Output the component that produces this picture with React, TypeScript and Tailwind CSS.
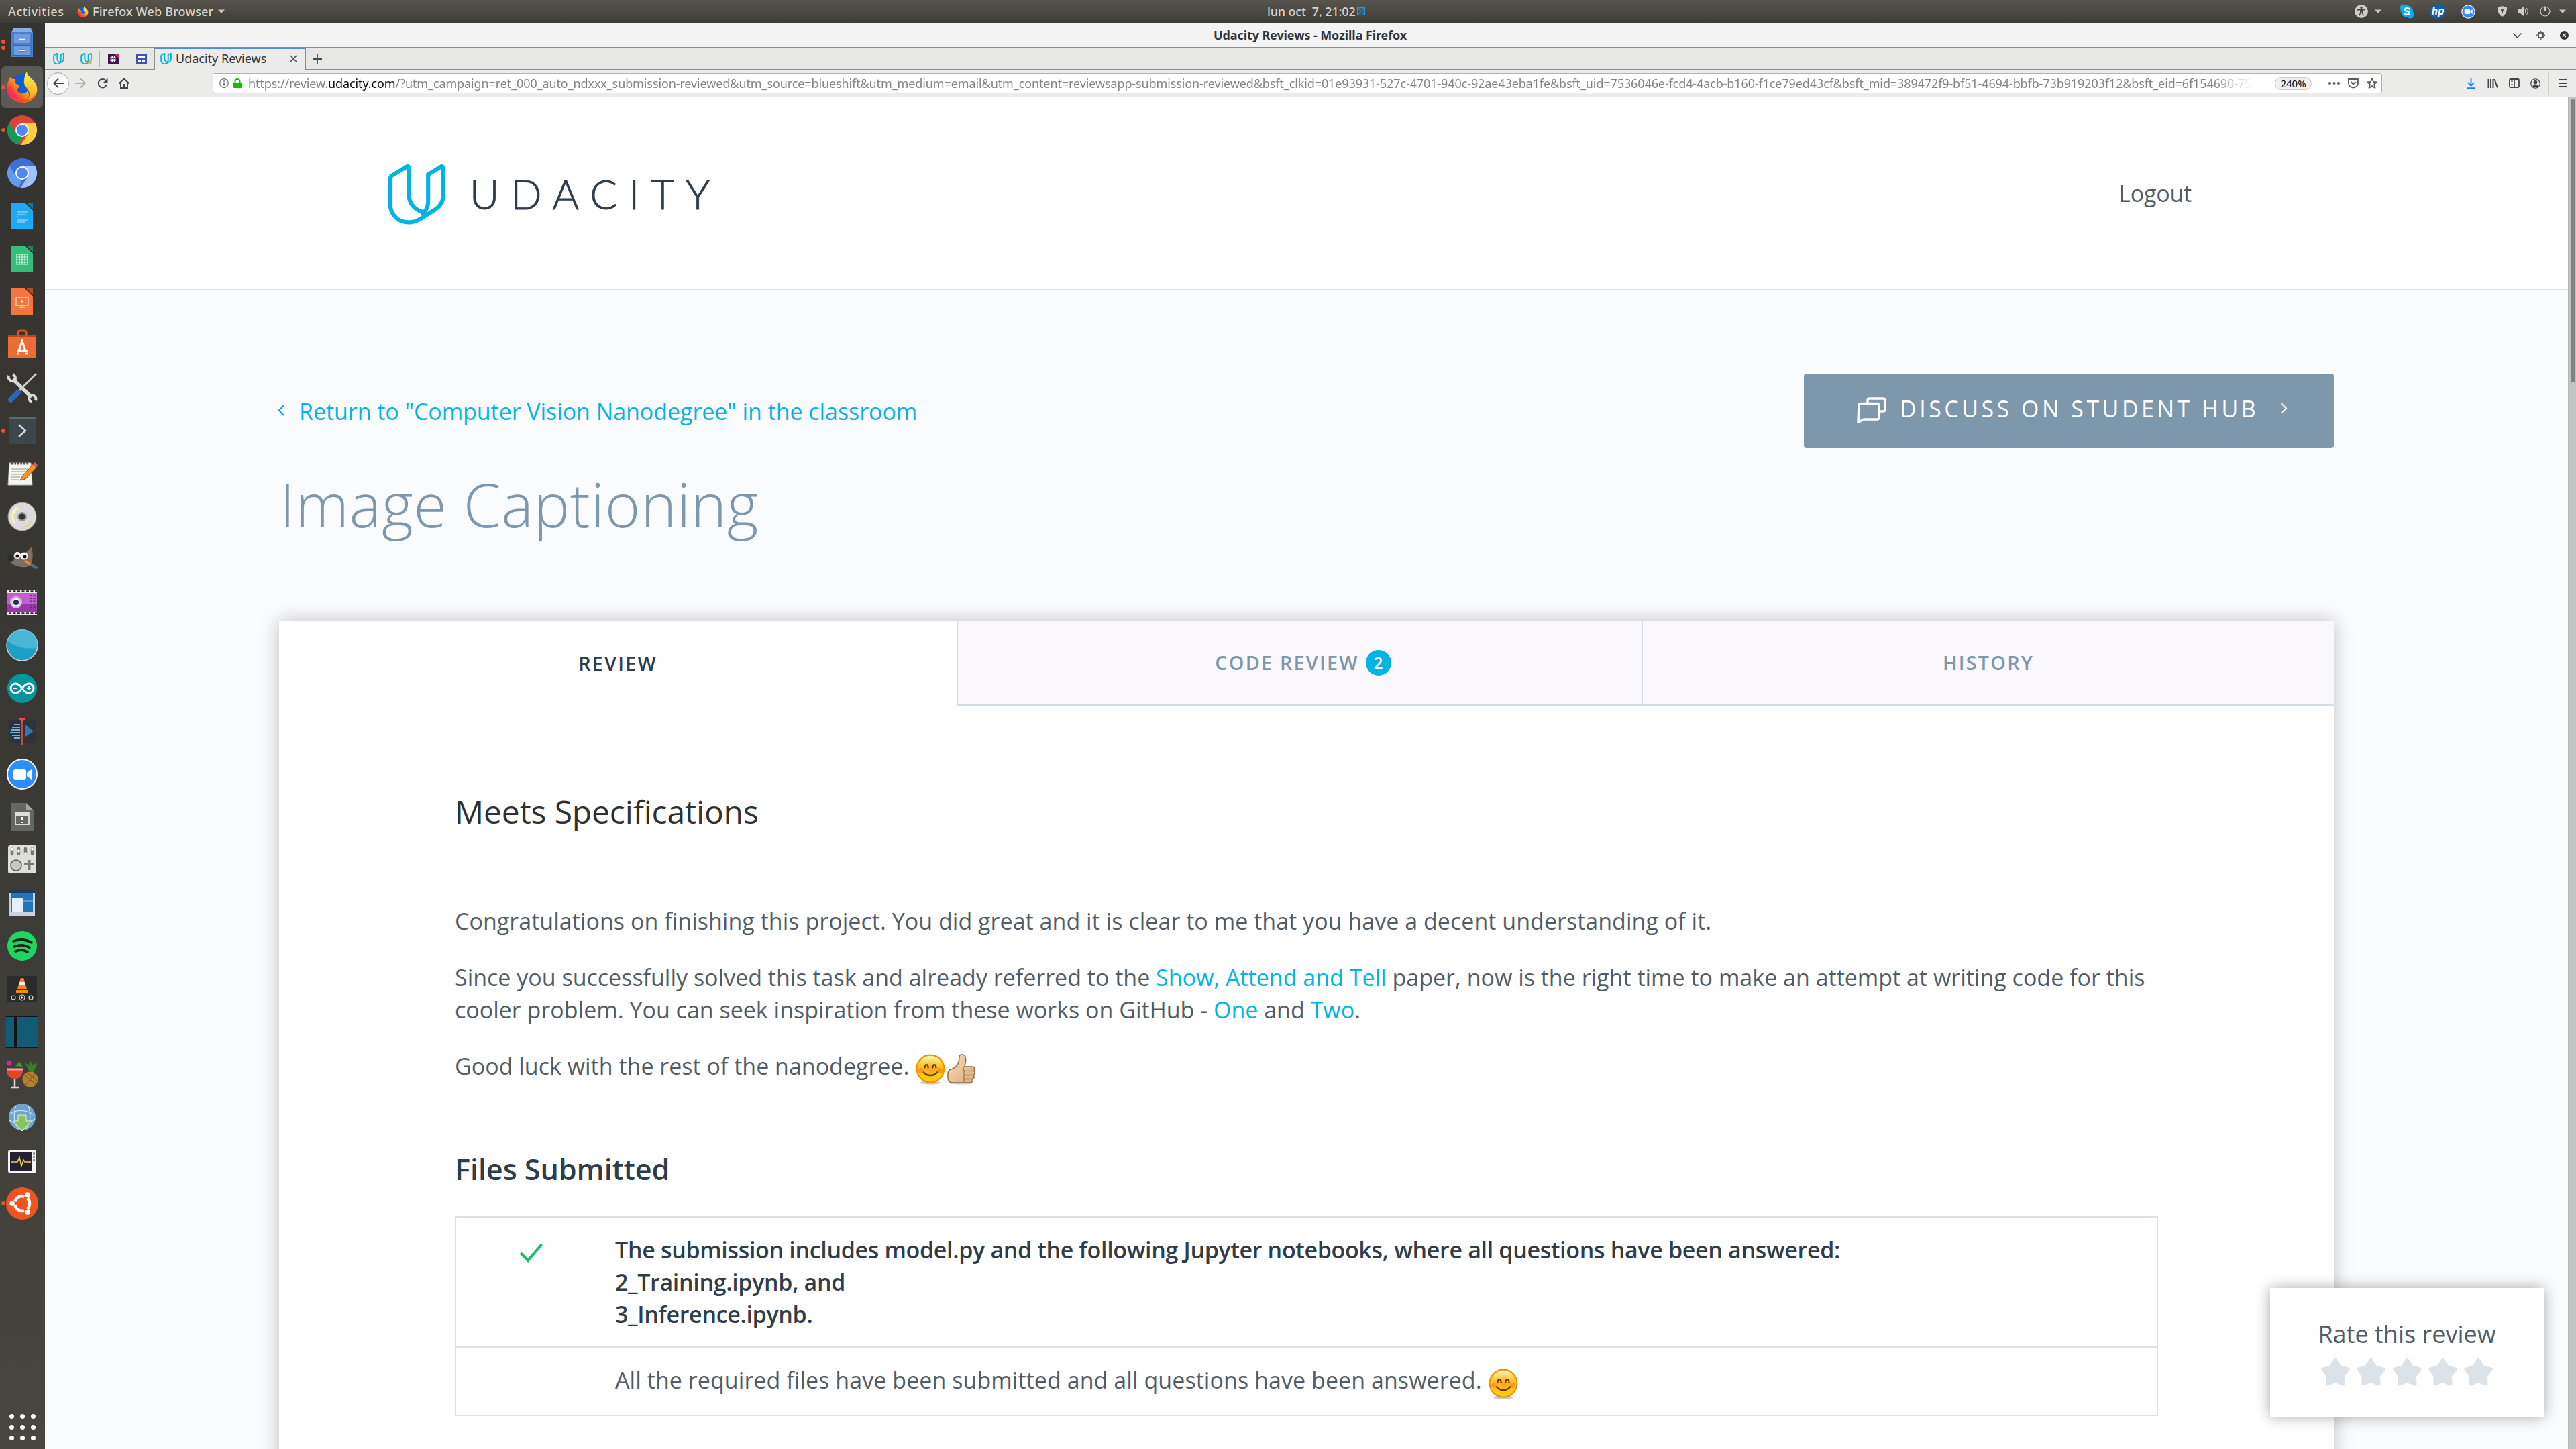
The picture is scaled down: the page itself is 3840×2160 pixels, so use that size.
import type { ReactNode } from "react";

const UI = "font-['Noto_Sans','Open_Sans',sans-serif]";

/* ---------- small shared drawings ---------- */

function UMark({ className, dot }: { className?: string; dot?: boolean }) {
  return (
    <svg className={className} viewBox="108 83 240 254" fill="none" stroke="#02b3e4" strokeWidth={dot === undefined ? 17 : 28}>
      <path d="M118 137V248C118 297 152 327 196 327C214 327 230 321 243 313L298 278C323 264 339 243 339 212V98L332 94L276 128V240C276 262 270 278 248 296" />
      <path d="M118 137L190 94L196 98V212C196 250 226 284 266 284" />
      {dot ? <circle cx="310" cy="290" r="26" fill="#fbad18" stroke="#fbad18" /> : null}
    </svg>
  );
}

function Firefox({ className }: { className?: string }) {
  return (
    <svg className={className} viewBox="0 0 48 48">
      <defs>
        <linearGradient id="ffo" x1="0.9" y1="0.1" x2="0.15" y2="0.9">
          <stop offset="0" stopColor="#ffe226" />
          <stop offset="0.45" stopColor="#ff8a16" />
          <stop offset="0.75" stopColor="#ff3647" />
          <stop offset="1" stopColor="#e31587" />
        </linearGradient>
        <linearGradient id="ffy" x1="0.5" y1="0" x2="0.5" y2="1">
          <stop offset="0" stopColor="#fff44f" />
          <stop offset="1" stopColor="#ff980e" />
        </linearGradient>
      </defs>
      <circle cx="25" cy="24" r="19" fill="#0a5fd8" />
      <path d="M6 9C8 12 11 12 14 12C12 16 13 18 17 20C22 22 20 24 16 27C18 34 28 36 32 29C38 38 30 46 22 46C10 46 1 37 1 26C1 19 4 14 6 9Z" fill="url(#ffo)" />
      <path d="M31 1C31 8 41 11 45 20C50 32 41 47 24 47C32 45 37 38 34 30C31 23 26 22 27 14C27 9 29 4 31 1Z" fill="url(#ffy)" />
      <path d="M4 34C8 43 16 47 25 47C34 47 42 41 45 33C40 40 33 43 26 42C16 42 8 40 4 34Z" fill="#ff4a30" opacity=".8" />
    </svg>
  );
}

function Smile({ className }: { className?: string }) {
  return (
    <svg className={className} viewBox="0 0 44 46">
      <defs>
        <radialGradient id="smile" cx="0.5" cy="0.45" r="0.55">
          <stop offset="0" stopColor="#ff9a1a" />
          <stop offset="0.55" stopColor="#ffbf26" />
          <stop offset="1" stopColor="#ffd400" />
        </radialGradient>
        <linearGradient id="shine" x1="0" y1="0" x2="0" y2="1">
          <stop offset="0" stopColor="#fff7c4" />
          <stop offset="1" stopColor="#ffd75a" stopOpacity="0" />
        </linearGradient>
      </defs>
      <ellipse cx="22" cy="43" rx="15" ry="2.5" fill="#000" opacity=".22" />
      <circle cx="22" cy="22" r="20.5" fill="url(#smile)" stroke="#ef8b10" strokeWidth="2" />
      <ellipse cx="22" cy="13" rx="15" ry="10" fill="url(#shine)" />
      <ellipse cx="8" cy="25" rx="4.5" ry="4" fill="#ff7a10" opacity=".6" />
      <ellipse cx="36" cy="25" rx="4.5" ry="4" fill="#ff7a10" opacity=".6" />
      <path d="M13.5 20.5C14.2 14.5 18 14.5 18.7 20.5M25.3 20.5C26 14.5 29.8 14.5 30.5 20.5" fill="none" stroke="#6b3a08" strokeWidth="2.2" strokeLinecap="round" />
      <path d="M12 27.5C17 33.5 27 33.5 32 27.5" fill="none" stroke="#6b3a08" strokeWidth="2.4" strokeLinecap="round" />
    </svg>
  );
}

function Thumb({ className }: { className?: string }) {
  return (
    <svg className={className} viewBox="0 0 42 46">
      <defs>
        <linearGradient id="skin" x1="0" y1="0" x2="1" y2="1">
          <stop offset="0" stopColor="#f9dfbd" />
          <stop offset="1" stopColor="#d9ab7c" />
        </linearGradient>
      </defs>
      <ellipse cx="21" cy="43.5" rx="18" ry="2" fill="#000" opacity=".2" />
      <path d="M18 5C18 1 20 .8 23 1C27 1.5 28 6 27.5 11L26 19H37C41 19 42 23 39.5 25C42 27 41 31 39 31.5C41 33.5 40 37 38 37.5C39 41 37 43 33 43H8C3 43 1 40 1 35V30C1 25 3 23 7 22.5C12 21 16 16 17 12Z" fill="url(#skin)" stroke="#9b6b43" strokeWidth="1.5" />
      <path d="M40 25.3H27C23 25 23 21 26 19M39 31.5H27C24 31 24 27 26 25.5M38 37.5H27C24 37 24 33 26 31.5M27 43C24 42 24 39 26 37.5" fill="none" stroke="#a87850" strokeWidth="1.3" />
    </svg>
  );
}

const Tri = () => (
  <svg className="h-[7px] w-[10px]" viewBox="0 0 10 7"><path d="M0 0.5H10L5 6Z" fill="#c9c5bd" /></svg>
);

/* ---------- dock ---------- */

const svg = (children: ReactNode) => (
  <svg className="h-12 w-12" viewBox="0 0 48 48">{children}</svg>
);

const page = (fill: string, fold: string, inner: ReactNode) => svg(
  <>
    <path d="M8 4H29L40 15V44H8Z" fill={fill} />
    <path d="M29 4H40V15Z" fill={fold} />
    <path d="M29 4L40 15" stroke="#2c2b28" strokeWidth="1.5" />
    {inner}
  </>
);

const chrome = (a: string, b: string, c: string) => svg(
  <>
    <circle cx="24" cy="24" r="22" fill={a} />
    <path d="M5 13L14.5 28.5L24 34L19 45.5A22 22 0 0 1 5 13Z" fill={b} />
    <path d="M24 14H43.6A22 22 0 0 1 22 46L33 29Z" fill={c} />
    <circle cx="24" cy="24" r="10" fill="#fff" />
    <circle cx="24" cy="24" r="8" fill="#4c8bf5" />
  </>
);

const dock: { name: string; dots?: number; active?: boolean; icon: ReactNode }[] = [
  { name: "files", dots: 2, icon: svg(<>
    <path d="M11 0H37L40 6V43H8V6Z" fill="#86aee6" />
    <path d="M8 6H40V43H8Z" fill="#4a80cc" />
    <path d="M11 8.500H37V23H11ZM11 25.500H37V40.500H11Z" fill="#6d9ce0" stroke="#3465a8" />
    <path d="M19.500 15H28.500V17.500H19.500ZM19.500 32H28.500V34.500H19.500Z" fill="#f2f2ee" stroke="#555" strokeWidth=".8" />
  </>) },
  { name: "firefox", dots: 1, active: true, icon: <Firefox className="h-12 w-12" /> },
  { name: "chrome", dots: 1, icon: chrome("#db4437", "#0f9d58", "#ffcd40") },
  { name: "chromium", icon: chrome("#3f6fd6", "#6398f3", "#a1c2fa") },
  { name: "writer", icon: page("#1fa9f4", "#1a6ea5", <path d="M16 18H32M16 22H30M16 25H18M16 30H32M16 33H28" stroke="#bfe6fd" strokeWidth="1.2" />) },
  { name: "calc", icon: page("#35bd79", "#1f8260", <path d="M16 17H32V32H16ZM16 21H32M16 25H32M16 29H32M20 17V32M24 17V32M28 17V32" fill="none" stroke="#d5f5e3" strokeWidth="1.2" />) },
  { name: "impress", icon: page("#f2763d", "#a3531f", <><path d="M15 17H33V29H15ZM19 32H29M24 29V32" fill="none" stroke="#fcd9c6" strokeWidth="1.3" /><path d="M22 20L27 23L22 26Z" fill="#fcd9c6" /></>) },
  { name: "software", icon: svg(<>
    <path d="M18 14V6Q18 3 21 3H27Q30 3 30 6V14" fill="none" stroke="#d9501f" strokeWidth="3" />
    <path d="M3 9H45V44H3Z" fill="#ee6b33" /><path d="M3 9H45V12H3Z" fill="#b8431c" />
    <path d="M18 13V7M30 13V7" stroke="#d9501f" strokeWidth="3" />
    <path d="M19 33L24 19L29 33M16 33H32M17 37H20M28 37H32" fill="none" stroke="#fff" strokeWidth="3.2" />
  </>) },
  { name: "tools", icon: svg(<>
    <path d="M10 11L38 38" stroke="#d9dad6" strokeWidth="5.5" />
    <path d="M4 6A6 6 0 0 0 13 13A6 6 0 0 0 10 4" fill="none" stroke="#d9dad6" strokeWidth="4" />
    <path d="M44 43A6 6 0 0 0 35 36A6 6 0 0 0 38 45" fill="none" stroke="#d9dad6" strokeWidth="4" />
    <path d="M45 3L19 29" stroke="#c9ccd0" strokeWidth="3" /><path d="M18 31L7 42" stroke="#3267b0" strokeWidth="8" strokeLinecap="round" />
  </>) },
  { name: "terminal", dots: 1, icon: svg(<><path d="M4 4H44V44H4Z" fill="#3d474b" /><path d="M4 4H44V6H4Z" fill="#5b676b" /><path d="M19 15L29 24L19 33" fill="none" stroke="#d5dadb" strokeWidth="2.5" /></>) },
  { name: "gedit", icon: svg(<>
    <path d="M5 8H37L39 41H3Z" fill="#f4f4f0" stroke="#b9b8b2" />
    <path d="M8 8H35" stroke="#56554f" strokeWidth="5" strokeDasharray="2.5 2" />
    <path d="M8 17H33M8 21H31M8 25H29M8 29H21M8 33H19" stroke="#9a9a94" strokeWidth="1.2" />
    <path d="M21 34L24 28L40 10L45 15L29 32Z" fill="#f79321" stroke="#9e5a10" /><path d="M40 10L43 7L47 11L45 15Z" fill="#e2525b" />
  </>) },
  { name: "disc", icon: svg(<><circle cx="24" cy="24" r="21" fill="#d9d9de" stroke="#9a9a98" /><path d="M18 11A14 14 0 0 0 14 34" fill="none" stroke="#fff6b0" strokeWidth="3" /><path d="M24 40A16 16 0 0 0 38 30" fill="none" stroke="#e8d56a" strokeWidth="2" /><circle cx="24" cy="24" r="7" fill="#9a9a98" /><circle cx="24" cy="24" r="4.5" fill="#33322e" /></>) },
  { name: "gimp", icon: svg(<>
    <path d="M5 27C9 14 17 19 24 16C31 14 35 9 38 5C41 16 41 34 30 35C20 36 12 33 5 27Z" fill="#7f6f5f" />
    <circle cx="7" cy="23" r="5" fill="#22302f" /><circle cx="17" cy="18" r="5" fill="#fff" /><circle cx="27" cy="19" r="5.5" fill="#fff" /><circle cx="17" cy="19" r="2.5" /><circle cx="28" cy="20" r="2.5" />
    <path d="M28 26L38 32" stroke="#f08a24" strokeWidth="3" /><path d="M37 31L46 37" stroke="#4d6f8a" strokeWidth="4" />
  </>) },
  { name: "screen", icon: svg(<>
    <path d="M2 5H46V43H2Z" fill="#c25fcd" /><path d="M2 26H46V43H2Z" fill="#973aa8" /><path d="M2 5H46V10H2ZM2 38H46V43H2Z" fill="#e9e9e6" />
    <path d="M4 7.5H46M4 40.5H46" stroke="#2c2b28" strokeWidth="2.4" strokeDasharray="4 2.5" />
    <circle cx="15" cy="24" r="9" fill="#c9c4d2" /><circle cx="15" cy="24" r="6" fill="#f2f2f4" /><circle cx="15" cy="24" r="4" fill="#35206a" /><path d="M37 13V35M42 13V35" stroke="#732c83" strokeWidth="3.4" strokeDasharray="1.8 2.5" />
  </>) },
  { name: "blue", icon: svg(<><circle cx="24" cy="24" r="23" fill="#1e9fc7" stroke="#c8d2d4" strokeWidth="1.5" /><path d="M2 17C14 27 30 30 46 28A22 22 0 0 0 2 17Z" fill="#55bcd9" opacity=".8" /></>) },
  { name: "arduino", icon: svg(<><circle cx="24" cy="24" r="22" fill="#00979c" /><path d="M24 24C20 18 17 17 14 17A7 7 0 0 0 14 31C17 31 20 30 24 24C28 18 31 17 34 17A7 7 0 0 1 34 31C31 31 28 30 24 24Z" fill="none" stroke="#fff" strokeWidth="3" /><path d="M11 24H17M31 24H37M34 21V27" stroke="#fff" strokeWidth="1.8" /></>) },
  { name: "kdenlive", icon: svg(<><path d="M4 7H44V41H4Z" fill="#2d3338" /><path d="M12 13H21M9 17H21M7 21H21M6 25H21M9 29H21M12 33H21" transform="translate(0 1)" stroke="#6fb1de" strokeWidth="2" /><path d="M29 14L41 24L29 32Z" fill="#3674ab" /><path d="M24 7V44" stroke="#c44a3a" strokeWidth="2" /><path d="M18 4H30L24 11Z" fill="#ee4b4b" /></>) },
  { name: "zoom", icon: svg(<><circle cx="24" cy="24" r="22" fill="#2d8cff" stroke="#f2f4f7" strokeWidth="2" /><rect x="11" y="17" width="19" height="15" rx="3" fill="#fff" /><path d="M31 22L38 17V32L31 27Z" fill="#fff" /></>) },
  { name: "doc", icon: svg(<><path d="M7 3H30L41 14V45H7Z" fill="#666665" /><path d="M30 3V14H41Z" fill="#a5a5a3" /><path d="M14 18H34V35H14ZM14 21H34" fill="none" stroke="#dededb" strokeWidth="1.8" /><path d="M24 24V29M24 31V33" stroke="#fff" strokeWidth="2" /></>) },
  { name: "controls", icon: svg(<><rect x="3" y="2" width="42" height="42" rx="3" fill="#dedfd9" /><path d="M9 7V15M19 7V15M29 7V15M39 7V15" stroke="#777872" strokeWidth="4.5" strokeLinecap="round" /><path d="M9 7V8M19 10V11M29 14V15M39 7V8" stroke="#fff" strokeWidth="3.6" strokeLinecap="round" /><circle cx="15" cy="32" r="8" fill="#c7c8c2" stroke="#555650" strokeWidth="1.500" /><path d="M27 30H42M34.5 24V39" stroke="#7c7d77" strokeWidth="4" /></>) },
  { name: "display", icon: svg(<><path d="M5 5H43V44H5Z" fill="#c9d3dc" /><path d="M5 5H43V9H5Z" fill="#233a57" /><path d="M8 9H40V38H8Z" fill="#2274bb" /><path d="M9 17H26V37H9Z" fill="#e8eff6" /><path d="M26 21H40" stroke="#8cc2ea" /></>) },
  { name: "spotify", icon: svg(<><circle cx="24" cy="24" r="22" fill="#1ed760" /><path d="M11 17Q25 12 38 19M12 25Q25 20 35 26.5M14 32Q24 28 32 33" fill="none" stroke="#17211a" strokeWidth="3.6" strokeLinecap="round" /></>) },
  { name: "vlc", icon: svg(<><path d="M2 5H46V43H2Z" fill="#2b2b2d" /><path d="M22 8H26L31 24H17Z" fill="#f78b10" /><path d="M20.5 14H27.5L28.5 18H19.5Z" fill="#eee" /><path d="M15 26H33V30H15Z" fill="#f78b10" /><g fill="none" stroke="#dcdcdc" strokeWidth="1.2"><circle cx="24" cy="37" r="4" /><circle cx="11" cy="37" r="3" /><circle cx="37" cy="37" r="3" /></g><path d="M23 35L26 37L23 39Z" fill="#fff" /></>) },
  { name: "panels", icon: svg(<><path d="M0 0H48V48H0Z" fill="#111417" /><path d="M0 2H12V46H0ZM17 2H48V46H17Z" fill="#125b73" /></>) },
  { name: "fruit", icon: svg(<>
    <circle cx="36" cy="31" r="11.500" fill="#b4822c" /><path d="M27 24L44 38M30 20L46 33M44 22L28 40" stroke="#6c4a14" strokeWidth="1" /><path d="M35 20L28 6L34 10L36 3L40 10L47 6L41 20Z" fill="#3c7d28" />
    <path d="M1 16H25Q25 30 13 30Q1 30 1 16Z" fill="#e4442c" /><path d="M1 16H25" stroke="#f3a59a" strokeWidth="3" /><path d="M13 30V42M7 43H19" stroke="#d5dadb" strokeWidth="2.5" /><circle cx="5" cy="7" r="3.5" fill="#cf2ba5" /><path d="M14 11L20 5L25 12Z" fill="#2fa13a" />
  </>) },
  { name: "torrent", icon: svg(<><circle cx="24" cy="23" r="20" fill="#6ea3cf" /><path d="M6 18Q24 8 42 20M5 28Q24 40 43 26M15 6Q8 24 18 41M33 6Q40 24 30 41" fill="none" stroke="#cfe4f5" strokeWidth="1.2" /><path d="M18 20H30V29H38L24 44L10 29H18Z" fill="#86c558" stroke="#dff2cf" /></>) },
  { name: "activity", icon: svg(<><rect x="3" y="9" width="42" height="33" rx="2" fill="#f4f4f4" /><path d="M6 12H38V39H6Z" fill="#25202f" /><path d="M7 26H17L20 19L23 32L26 23L28 26H37" fill="none" stroke="#e8cf4f" strokeWidth="1.6" /><path d="M41.5 12V28" stroke="#999" strokeWidth="3" strokeDasharray="3 2" /></>) },
  { name: "ubuntu", dots: 1, icon: svg(<><circle cx="24" cy="24" r="24" fill="#f0541e" /><circle cx="24" cy="24" r="11" fill="none" stroke="#fff" strokeWidth="4.5" strokeDasharray="18 5" strokeDashoffset="-14" /><circle cx="9" cy="24" r="3.8" fill="#fff" /><circle cx="32" cy="11" r="3.8" fill="#fff" /><circle cx="32" cy="37" r="3.8" fill="#fff" /></>) },
];

function Dock() {
  return (
    <aside className="flex w-[67px] shrink-0 flex-col bg-linear-to-b from-[#34332f] via-[#3a3833] to-[#48463f]">
      {dock.map((d) => (
        <div key={d.name} className="flex h-16 shrink-0 items-center">
          <div className="flex w-[9px] flex-col items-center gap-[3px]">
            {Array.from({ length: d.dots ?? 0 }, (_, i) => (
              <span key={i} className="relative z-10 size-[6px] rounded-full bg-[#e95420]" />
            ))}
          </div>
          <div className={d.active ? "-ml-[7px] flex h-[62px] w-[62px] items-center justify-center rounded-md bg-[#5c5a57]" : "flex w-12 items-center justify-center"}>
            {d.icon}
          </div>
        </div>
      ))}
      <div className="mt-auto grid grid-cols-3 gap-[9px] self-center pb-[13px]">
        {Array.from({ length: 9 }, (_, i) => <span key={i} className="size-[7px] rounded-full bg-white" />)}
      </div>
    </aside>
  );
}

/* ---------- desktop bar ---------- */

function TopBar() {
  return (
    <div className={`${UI} flex h-[34px] shrink-0 items-center bg-linear-to-b from-[#58554d] to-[#3e3c37] text-[18px] font-medium text-[#d6d2ca]`}>
      <div className="flex w-[1889px] items-center pl-3">
        <span className="w-[103px] tracking-[0.6px]">Activities</span>
        <Firefox className="size-[17px]" />
        <span className="ml-[6px] w-[187px] whitespace-nowrap tracking-[0.17px]">Firefox Web Browser</span>
        <Tri />
      </div>
      <span className="w-[134px] whitespace-pre tracking-[-0.15px]">lun oct  7, 21:02</span>
      <svg className="h-3 w-3" viewBox="0 0 12 12" fill="none" stroke="#1c9ce8" strokeWidth="1.3"><path d="M.5 .5H11.5V11.5H.5ZM1 1L11 11M11 1L1 11" /></svg>
      <div className="ml-auto flex items-center text-[#d0cdc6]">
        <svg className="size-5" viewBox="0 0 20 20"><circle cx="10" cy="10" r="10" fill="#cfccc6" /><circle cx="10" cy="4.5" r="1.7" fill="#46443e" /><path d="M4 7.7H16M10 7.5V11M8.8 8V12L6.8 16.5M11.2 8V12L13.2 16.5" fill="none" stroke="#46443e" strokeWidth="1.5" /></svg>
        <span className="ml-[10px]"><Tri /></span>
        <svg className="ml-[27px] size-[22px]" viewBox="0 0 22 22"><circle cx="11" cy="11" r="9" fill="#00aff0" /><circle cx="6" cy="6" r="5.5" fill="#00aff0" /><circle cx="16" cy="16" r="5.5" fill="#00aff0" /><path d="M14.5 7.5C13 5.5 8 5.5 8 8.5C8 11.5 14.5 10.2 14.5 13.5C14.5 16.5 8.5 16.5 7 14" fill="none" stroke="#fff" strokeWidth="2.2" strokeLinecap="round" /></svg>
        <span className="ml-6 flex size-[22px] items-center justify-center rounded-full bg-[#0e5fae] pb-[2px] text-[16px] leading-none font-bold text-white italic">hp</span>
        <svg className="ml-6 size-[21px]" viewBox="0 0 48 48"><circle cx="24" cy="24" r="22" fill="#2d8cff" stroke="#dfe9f5" strokeWidth="3" /><rect x="11" y="16" width="19" height="16" rx="3" fill="#fff" /><path d="M31 22L38 16V32L31 27Z" fill="#fff" /></svg>
        <svg className="ml-8 h-4 w-4" viewBox="0 0 16 16"><path d="M8 0L15 2C15.5 9 12 14 8 16C4 14 .5 9 1 2Z" fill="#cfccc6" /><circle cx="8" cy="6" r="2" fill="#46443e" /><path d="M8 6V11" stroke="#46443e" strokeWidth="2" /></svg>
        <svg className="ml-4 h-4 w-4" viewBox="0 0 16 16" fill="none" stroke="#cfccc6"><path d="M0 5H3L8 1V15L3 11H0Z" fill="#cfccc6" stroke="none" /><path d="M10 5Q12 8 10 11M12.5 3Q16 8 12.5 13" /></svg>
        <svg className="ml-4 size-4" viewBox="0 0 16 16" fill="none" stroke="#cfccc6" strokeWidth="1.2"><circle cx="8" cy="8" r="7" /><path d="M8 1V8" strokeWidth="2" /></svg>
        <span className="mr-[15px] ml-[13px]"><Tri /></span>
      </div>
    </div>
  );
}

/* ---------- browser chrome ---------- */

function TitleBar() {
  return (
    <div className={`${UI} flex h-9 shrink-0 items-center border-t border-white bg-[#f3f3f3] text-[18px] font-bold text-[#31363b]`}>
      <span className="ml-[1742px] whitespace-nowrap tracking-[-0.1px]">Udacity Reviews - Mozilla Firefox</span>
      <div className="mr-[11px] ml-auto flex items-center gap-[22px]">
        <svg className="h-[8px] w-[13px]" viewBox="0 0 13 8" fill="none" stroke="#31363b" strokeWidth="1.3"><path d="M.5 .5L6.5 7L12.5 .5" /></svg>
        <svg className="size-[13px]" viewBox="0 0 13 13" fill="#31363b"><path d="M3 3H10V10H3Z" fill="none" stroke="#31363b" strokeWidth="1.5" /><path d="M4.5 1.5L6.5 0L8.5 1.5ZM4.5 11.5L6.5 13L8.5 11.5ZM1.5 4.5L0 6.5L1.5 8.5ZM11.5 4.5L13 6.5L11.5 8.5Z" /></svg>
        <svg className="size-[13px]" viewBox="0 0 13 13"><circle cx="6.5" cy="6.5" r="6.5" fill="#31363b" /><path d="M4 4L9 9M9 4L4 9" stroke="#fff" strokeWidth="1.3" /></svg>
      </div>
    </div>
  );
}

function TabStrip() {
  const cell = "flex h-[24px] w-[41px] items-center justify-center";
  return (
    <div className={`${UI} flex h-[34px] shrink-0 items-center border-t border-[#8e8e8d] bg-[#e7e7e6] shadow-[inset_0_-1px_0_#8e8e8d]`}>
      <div className={`${cell} border-r border-[#b5b5b4]`}><UMark className="size-[17px]" dot={false} /></div>
      <div className={`${cell} border-r border-[#b5b5b4]`}><UMark className="size-[17px]" dot /></div>
      <div className={`${cell} border-r border-[#b5b5b4]`}>
        <svg className="size-4" viewBox="0 0 16 16"><path d="M0 0H16V16H0Z" fill="#43144a" /><path d="M9 0H16V7Z" fill="#d2234f" /><path d="M6.3 3V13M9.7 3V13M3 6.3H13M3 9.7H13" stroke="#fff" strokeWidth="1.8" strokeDasharray="4 1" /></svg>
      </div>
      <div className={cell}>
        <svg className="size-4" viewBox="0 0 16 16"><path d="M0 0H16V16H0Z" fill="#3f51b5" /><path d="M3 4H13V7H3ZM3 9H7V12H3ZM9 9H13V12H9Z" fill="#fff" /></svg>
      </div>
      <div className="-ml-px flex h-[33px] w-[226px] items-center border-x border-[#8e8e8d] bg-[#ebebea] shadow-[inset_0_2px_0_#4a90d9]">
        <UMark className="ml-[8px] size-[17px]" dot={false} />
        <span className="ml-[6px] w-[170px] text-[18px] whitespace-nowrap text-[#31363b]">Udacity Reviews</span>
        <svg className="size-[11px]" viewBox="0 0 11 11" stroke="#4a4f54" strokeWidth="1.6"><path d="M1 1L10 10M10 1L1 10" /></svg>
      </div>
      <svg className="ml-[10px] size-[14px]" viewBox="0 0 14 14" stroke="#45494e" strokeWidth="1.8"><path d="M7 0V14M0 7H14" /></svg>
    </div>
  );
}

function Toolbar() {
  return (
    <div className={`${UI} flex h-[41px] shrink-0 items-center border-b border-[#b9b9b8] bg-[#ebebea]`}>
      <div className="flex w-[250px] items-center">
        <span className="ml-[3px] flex size-[33px] items-center justify-center rounded-full border border-[#a3a3a2] bg-[#fafafa]">
          <svg className="size-4" viewBox="0 0 16 16" fill="none" stroke="#42474b" strokeWidth="2"><path d="M16 8H1.5M8 1.5L1.5 8L8 14.5" /></svg>
        </span>
        <svg className="ml-[9px] size-4" viewBox="0 0 16 16" fill="none" stroke="#b1b1b0" strokeWidth="2"><path d="M0 8H14.5M8 1.5L14.5 8L8 14.5" /></svg>
        <svg className="ml-[17px] size-4" viewBox="0 0 16 16" fill="none" stroke="#42474b" strokeWidth="2"><path d="M13.5 11A6.2 6.2 0 1 1 13 4.5" /><path d="M15.5 .5V7H9Z" fill="#42474b" stroke="none" /></svg>
        <svg className="ml-4 size-4" viewBox="0 0 16 16" fill="none" stroke="#42474b" strokeWidth="2"><path d="M.5 8.5L8 1.5L15.5 8.5M3 7V15H13V7" /><path d="M6.5 9H9.5V15H6.5Z" fill="#42474b" stroke="none" /></svg>
      </div>
      <div className="flex h-[30px] w-[3234px] items-center rounded-[3px] border border-[#b3b3b2] bg-white">
        <svg className="ml-[9px] size-[14px]" viewBox="0 0 14 14" fill="none" stroke="#6e6e6e"><circle cx="7" cy="7" r="6.3" strokeWidth="1.2" /><path d="M7 6V10.5M7 3.3V4.9" strokeWidth="1.7" /></svg>
        <svg className="ml-[7px] h-[14px] w-3" viewBox="0 0 12 14"><path d="M2.5 7V4.5A3.5 3.5 0 0 1 9.5 4.5V7" fill="none" stroke="#12bc00" strokeWidth="2" /><rect y="6" width="12" height="8" rx="1" fill="#12bc00" /></svg>
        <div className="ml-[10px] w-[2989px] overflow-hidden text-[18px] leading-[28px] tracking-[-0.11px] whitespace-nowrap text-[#858585] mask-r-from-98% mask-r-to-100%">
          https://review.<span className="text-[#0c0c0d]">udacity.com</span>/?utm_campaign=ret_000_auto_ndxxx_submission-reviewed&amp;utm_source=blueshift&amp;utm_medium=email&amp;utm_content=reviewsapp-submission-reviewed&amp;bsft_clkid=01e93931-527c-4701-940c-92ae43eba1fe&amp;bsft_uid=7536046e-fcd4-4acb-b160-f1ce79ed43cf&amp;bsft_mid=389472f9-bf51-4694-bbfb-73b919203f12&amp;bsft_eid=6f154690-75
        </div>
        <span className="ml-[32px] flex h-[19px] w-[55px] items-center justify-center rounded-full border border-[#ccc] bg-[#f0f0f0] text-[15px] text-black">240%</span>
        <span className="ml-3 h-[22px] w-px bg-[#b5b5b5]" />
        <svg className="ml-3 h-1 w-[17px]" viewBox="0 0 17 4" fill="#5a5a5a"><circle cx="2" cy="2" r="2" /><circle cx="8.5" cy="2" r="2" /><circle cx="15" cy="2" r="2" /></svg>
        <svg className="ml-3 size-4" viewBox="0 0 16 16" fill="none" stroke="#5a5a5a" strokeWidth="1.8"><path d="M1 2H15V8A7 6.5 0 0 1 1 8Z" /><path d="M4.5 6L8 9.5L11.5 6" /></svg>
        <svg className="ml-3 size-4" viewBox="0 0 16 16" fill="none" stroke="#5a5a5a" strokeWidth="1.8" strokeLinejoin="round"><path d="M8 1L10 6L15 6.3L11.2 9.5L12.5 15L8 12L3.5 15L4.8 9.5L1 6.3L6 6Z" /></svg>
      </div>
      <div className="mr-[13px] ml-auto flex items-center">
        <svg className="size-[15px]" viewBox="0 0 14 16" fill="none" stroke="#0a84ff" strokeWidth="2"><path d="M7 0V11M2 6.5L7 11.5L12 6.5M0 15H14" /></svg>
        <svg className="ml-[17px] h-[14px] w-4" viewBox="0 0 16 14" fill="none" stroke="#42474b" strokeWidth="2"><path d="M1.5 1V14M5 1V14M8.5 1V14M10.5 1L15 13.5" /></svg>
        <svg className="ml-4 h-[14px] w-4" viewBox="0 0 16 14" fill="none" stroke="#42474b" strokeWidth="1.8"><rect x="1" y="1" width="14" height="12" rx="1.5" /><path d="M8 1V13" /><path d="M3 4H6M3 6.5H6M3 9H6" strokeWidth="1" /></svg>
        <svg className="ml-4 size-[15px]" viewBox="0 0 16 16"><circle cx="8" cy="8" r="7.2" fill="none" stroke="#42474b" strokeWidth="1.3" /><circle cx="8" cy="6" r="3" fill="#42474b" /><path d="M3 12Q8 7 13 12Q8 16.5 3 12Z" fill="#42474b" /></svg>
        <span className="ml-3 h-[33px] w-px bg-[#cfcfce]" />
        <svg className="ml-[15px] h-3 w-3" viewBox="0 0 12 12" stroke="#42474b" strokeWidth="2"><path d="M0 1H12M0 6H12M0 11H12" /></svg>
      </div>
    </div>
  );
}

/* ---------- web page ---------- */

function Star() {
  return (
    <svg className="h-[42px] w-[43px]" viewBox="359 431 131 126">
      <path d="M424 439L446 472L483 481L459 512L461 550L424 537L388 550L389 512L366 481L402 472Z" fill="#dbe2e8" stroke="#dbe2e8" strokeWidth="13" strokeLinejoin="round" />
    </svg>
  );
}

function Tab({ children, width, active }: { children: ReactNode; width: string; active?: boolean }) {
  return (
    <div className={`${width} flex h-[126px] items-center justify-center text-[28.8px] font-semibold tracking-[2.2px] ${active ? "bg-white text-[#2e3d49]" : "border-b-2 border-l-2 border-[#d3dde3] bg-[#faf8fd] text-[#7d97ad]"}`}>
      {children}
    </div>
  );
}

const A = ({ children }: { children: ReactNode }) => <a className="text-[#02b3e4]">{children}</a>;

function Page() {
  return (
    <div className="relative flex min-h-0 flex-1 font-['Open_Sans',sans-serif] text-[34px] leading-[48px] text-[#525c65]">
      <div className="flex min-w-0 flex-1 flex-col overflow-hidden bg-[#fafbfd]">
        <header className="flex h-[288px] shrink-0 items-center border-b-2 border-[#dbe2e8] bg-white">
          <UMark className="mt-[15px] ml-[511px] h-[91px] w-[86px] -translate-y-[6px]" />
          <span className="mt-px ml-[36px] font-['Lato',sans-serif] text-[61px] font-light tracking-[16.8px] text-[#2e3d49] [-webkit-text-stroke:0.8px_#2e3d49]">UDACITY</span>
          <span className="mr-[561px] ml-auto tracking-[-0.2px]">Logout</span>
        </header>
        <main className="flex flex-col px-[349px] pt-[124px]">
          <div className="flex h-[111px] items-start justify-between">
            <a className="mt-8 flex items-center text-[#02b3e4]">
              <svg className="-ml-[2px] mb-[4px] h-[17px] w-[10px]" viewBox="0 0 10 17" fill="none" stroke="#02a0d0" strokeWidth="2"><path d="M9 1L2 8.5L9 16" /></svg>
              <span className="ml-[22px] tracking-[-0.06px]">Return to "Computer Vision Nanodegree" in the classroom</span>
            </a>
            <a className="flex h-full w-[790px] items-center rounded-[4px] bg-[#7d97ad] text-white">
              <svg className="ml-[79px] h-[39px] w-[44px] -translate-y-px" viewBox="0 0 44 39" fill="none" stroke="#fff" strokeWidth="3.5" strokeLinejoin="round"><path d="M3 11.5Q3 9.5 6 9.5H30Q33 9.5 33 12.5V30Q33 33 30 33H10L2 37.5Z" /><path d="M16 9V5Q16 2 19 2H39Q42 2 42 5V18Q42 21 39 21H34" /></svg>
              <span className="-mt-[8px] ml-[20px] whitespace-nowrap tracking-[4.48px]">DISCUSS ON STUDENT HUB</span>
              <svg className="mb-[9px] ml-[32px] h-[17px] w-[11px]" viewBox="0 0 11 17" fill="none" stroke="#fff" strokeWidth="2"><path d="M1.5 1L9 8.5L1.5 16" /></svg>
            </a>
          </div>
          <h1 className="mt-[23px] ml-px text-[90px] leading-[120px] font-light tracking-[0.7px] text-[#7d97ad]">Image Captioning</h1>
          <section className="mt-[115px] flex h-[1300px] flex-col bg-white shadow-[0_-1px_0_#d3dde3,0_0_26px_rgba(0,0,0,0.25)]">
            <nav className="flex">
              <Tab width="w-[1010px]" active>REVIEW</Tab>
              <Tab width="w-[1021px]">
                <span className="pl-[10px]">CODE REVIEW</span>
                <span className="ml-[10px] flex size-[38px] items-center justify-center rounded-full bg-[#02b3e4] text-[24px] tracking-normal text-white">2</span>
              </Tab>
              <Tab width="w-[1032px]">HISTORY</Tab>
            </nav>
            <div className="px-[262px] pt-[128px]">
              <h2 className="text-[48px] leading-[60px] tracking-[-0.15px] text-[#303030]">Meets Specifications</h2>
              <p className="mt-[109px] tracking-[0.03px]">Congratulations on finishing this project. You did great and it is clear to me that you have a decent understanding of it.</p>
              <p className="mt-9 whitespace-nowrap">
                <span className="block">Since you successfully solved this task and already referred to the <A>Show, Attend and Tell</A> paper, now is the right time to make an attempt at writing code for this</span>
                <span className="block">cooler problem. You can seek inspiration from these works on GitHub - <A>One</A> and <A>Two</A>.</span>
              </p>
              <p className="mt-9 flex h-12 items-center whitespace-pre">
                Good luck with the rest of the nanodegree. <Smile className="mt-[10px] ml-px h-[46px] w-[44px]" /><Thumb className="mt-[10px] ml-[3px] h-[46px] w-[42px]" />
              </p>
              <h3 className="mt-[100px] text-[43.2px] leading-[60px] font-semibold tracking-[-0.08px] text-[#2e3d49]">Files Submitted</h3>
              <div className="mt-10 border-2 border-[#dbe2e8]">
                <div className="flex h-[194px] items-start border-b-2 border-[#dbe2e8] pt-[24px] font-semibold tracking-[-0.33px] text-[#2e3d49]">
                  <svg className="mt-[14px] ml-[94px] h-[29px] w-[35px]" viewBox="0 0 35 29" fill="none" stroke="#15c26b" strokeWidth="4"><path d="M2 15L13 26L33.5 2" /></svg>
                  <div className="ml-[108px]">
                    <span className="block whitespace-nowrap">The submission includes model.py and the following Jupyter notebooks, where all questions have been answered:</span>
                    <span className="block">2_Training.ipynb, and</span>
                    <span className="block">3_Inference.ipynb.</span>
                  </div>
                </div>
                <div className="h-[100px] pt-[24px] pl-[237px]">
                  <p className="flex h-12 items-center tracking-[0.06px] whitespace-pre">
                    All the required files have been submitted and all questions have been answered. <Smile className="mt-[11px] ml-px h-[46px] w-[44px]" />
                  </p>
                </div>
              </div>
            </div>
          </section>
        </main>
      </div>
      <div className="flex w-3 shrink-0 flex-col border-l border-[#b5b7b4] bg-[#c2c4c2]">
        <span className="mt-[3px] ml-[3px] h-[422px] w-[7px] rounded-full bg-[#7f8281]" />
      </div>
      <aside className="absolute right-12 bottom-12 flex h-48 w-[408px] flex-col items-center bg-white pt-[45px] shadow-[0_0_20px_rgba(0,0,0,0.35)]">
        <span className="text-[36px]">Rate this review</span>
        <div className="mt-[11px] flex gap-[10.4px]">{[0, 1, 2, 3, 4].map((i) => <Star key={i} />)}</div>
      </aside>
    </div>
  );
}

export default function App() {
  return (
    <div className="flex h-[2160px] w-[3840px] flex-col overflow-hidden">
      <TopBar />
      <div className="flex min-h-0 flex-1">
        <Dock />
        <div className="flex min-w-0 flex-1 flex-col">
          <TitleBar />
          <TabStrip />
          <Toolbar />
          <Page />
        </div>
      </div>
    </div>
  );
}
